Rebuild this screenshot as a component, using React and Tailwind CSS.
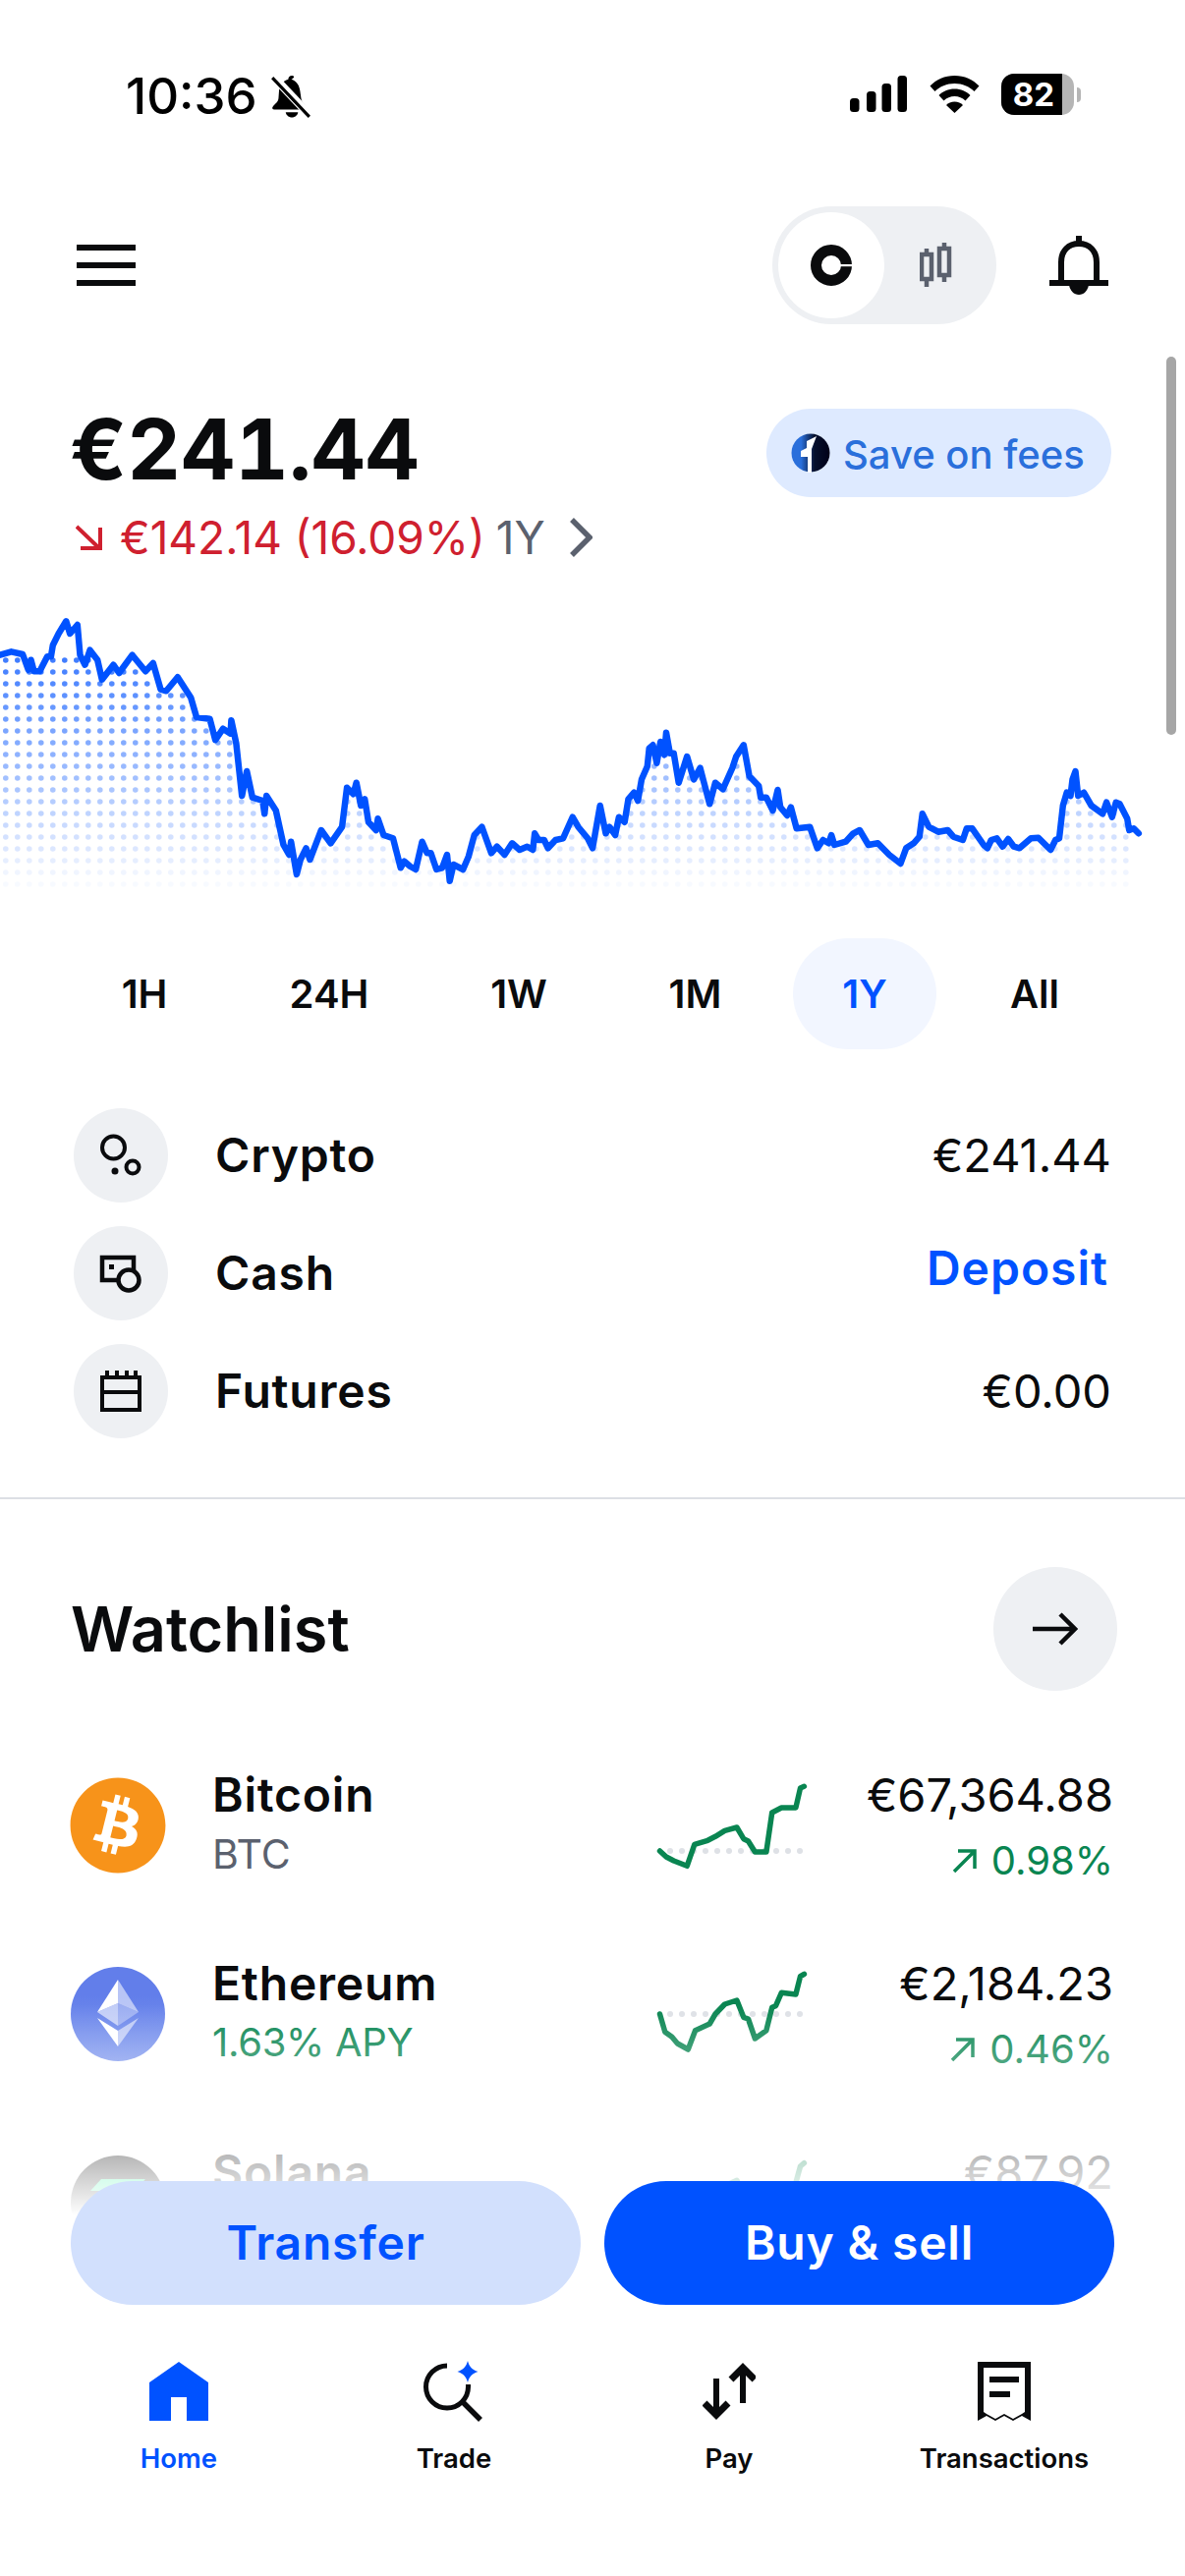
import React from 'react';
import { FaBitcoin } from 'react-icons/fa';

const LEFT = [[0,860],[30,850],[60,858],[75,905],[82,875],[90,910],[105,910],[125,865],[135,865],[140,830],[155,795],[175,757],[185,795],[205,768],[212,860],[225,890],[238,845],[258,875],[270,935],[300,890],[315,915],[350,860],[385,910],[405,885],[425,965],[440,970],[470,928],[505,990],[520,1050],[555,1055],[570,1120],[590,1085],[610,1100],[612,1060],[625,1130],[640,1290],[653,1215],[668,1295],[695,1305],[700,1345],[705,1290],[730,1335],[750,1440],[765,1470],[770,1430],[785,1530],[795,1485],[810,1450],[820,1485],[850,1395],[875,1435],[905,1385],[918,1265],[935,1285],[943,1250],[955,1320],[965,1300],[975,1370],[995,1395],[1000,1360],[1015,1410],[1040,1420],[1060,1510],[1070,1490],[1085,1505],[1100,1515],[1117,1430],[1130,1465],[1140,1465],[1155,1515],[1170,1510],[1183,1470],[1190,1550],[1200,1500],[1225,1515],[1240,1475],[1255,1410],[1275,1385],[1300,1465],[1315,1445],[1335,1470],[1355,1435],[1375,1455],[1395,1445],[1410,1455],[1415,1405],[1425,1425],[1440,1425],[1450,1450],[1470,1425],[1490,1420],[1515,1355],[1530,1385],[1555,1420],[1568,1450]];
const RIGHT = [[20,1320],[35,1405],[45,1385],[60,1410],[70,1355],[85,1370],[95,1300],[110,1280],[120,1305],[130,1240],[145,1200],[150,1145],[160,1135],[170,1190],[180,1125],[190,1165],[195,1097],[205,1160],[215,1160],[228,1250],[250,1170],[268,1240],[285,1205],[295,1250],[310,1315],[325,1250],[345,1270],[370,1205],[380,1170],[400,1135],[415,1230],[440,1260],[445,1295],[460,1295],[477,1335],[490,1272],[497,1325],[515,1350],[525,1325],[540,1390],[575,1385],[595,1450],[610,1425],[625,1435],[632,1410],[640,1440],[670,1430],[690,1405],[707,1395],[730,1440],[755,1435],[785,1470],[815,1497],[830,1450],[850,1435],[865,1415],[873,1345],[890,1385],[915,1400],[940,1395],[955,1415],[980,1425],[990,1390],[1005,1390],[1035,1440],[1045,1450],[1055,1425],[1070,1420],[1085,1445],[1100,1422],[1115,1445],[1130,1450],[1160,1420],[1180,1418],[1212,1455],[1225,1425],[1235,1420],[1245,1320],[1255,1280],[1265,1290],[1270,1240],[1278,1215],[1285,1290],[1300,1280],[1320,1320],[1350,1345],[1360,1310],[1375,1355],[1385,1310],[1395,1315],[1415,1360],[1420,1395],[1432,1390],[1445,1405]];
const LINE = [...LEFT.map(([x, y]) => [x / 2.6, 380 + y / 3]), ...RIGHT.map(([x, y]) => [603 + x / 2.6, 380 + y / 3])];
const BTC = [[178,372],[195,390],[215,402],[250,418],[270,352],[305,340],[325,328],[350,310],[382,300],[400,335],[412,342],[430,375],[460,375],[475,255],[500,240],[538,240],[550,180],[560,175]];
const ETH = [[178,870],[192,925],[210,940],[225,960],[253,978],[272,920],[310,900],[325,870],[350,840],[382,828],[400,880],[412,885],[430,945],[460,920],[475,850],[485,845],[500,805],[538,810],[550,755],[560,748]];
const SOL = [[178,1490],[253,1500],[272,1440],[350,1395],[382,1378],[400,1420],[430,1440],[460,1440],[475,1420],[538,1385],[550,1335],[560,1325]];

const pts = (a) => a.map(([x, y]) => `${x.toFixed(1)},${y.toFixed(1)}`).join(' ');
const sparkPts = (a) => pts(a.map(([x, y]) => [603 + x / 2.6, 1760 + y / 3]));

function lineYAt(x) {
  for (let i = 1; i < LINE.length; i++) {
    if (x <= LINE[i][0]) {
      const [x0, y0] = LINE[i - 1];
      const [x1, y1] = LINE[i];
      const t = x1 === x0 ? 0 : (x - x0) / (x1 - x0);
      return y0 + (y1 - y0) * t;
    }
  }
  return 2000;
}

const DOTS = [];
for (let r = 0; r < 20; r++) {
  const y = 672 + r * 12;
  for (let c = 0; c < 97; c++) {
    const x = 5.8 + c * 12;
    if (x > 1156) continue;
    if (y > lineYAt(x) + 3) DOTS.push({ x, y, o: Math.max(0.03, 0.75 - (y - 672) * 0.0032) });
  }
}

function Chart() {
  return (
    <svg className="block mt-[48px] w-full h-[290px]" viewBox="0 620 1206 290">
      {DOTS.map((d, i) => <circle key={i} cx={d.x} cy={d.y} r="2.8" fill="#0052ff" opacity={d.o} />)}
      <polyline points={pts(LINE)} fill="none" stroke="#0052ff" strokeWidth="6.5" strokeLinejoin="round" strokeLinecap="round" />
    </svg>
  );
}

function Spark({ data, top, base, color }) {
  return (
    <svg className="block flex-none w-[156px] h-[96px]" viewBox={`666 ${top} 156 96`}>
      {[0,1,2,3,4,5,6,7,8,9,10,11].map((i) => <circle key={i} cx={682 + i * 12} cy={top + base} r="3" fill="#dee1e6" />)}
      <polyline points={sparkPts(data)} fill="none" stroke={color} strokeWidth="5.5" strokeLinejoin="round" strokeLinecap="round" />
    </svg>
  );
}

function UpArrow({ color }) {
  return (
    <svg className="block flex-none w-[26px] h-[26px] mr-[14px]" viewBox="0 0 26 26" fill="none" stroke={color} strokeWidth="3.5">
      <path d="M2 24 23 3M6 3h17v18" />
    </svg>
  );
}

function StatusBar() {
  return (
    <div className="h-[210px] flex items-start justify-between pl-[128px] pr-[106px] pt-[74px]">
      <div className="flex items-center h-[48px]">
        <span className="text-[51px] leading-[48px] font-medium text-black">10:36</span>
        <svg className="ml-[13px] w-[42px] h-[46px]" viewBox="0 0 40 44">
          <path d="M21 2c-2 0-3.500 1.600-3.500 3.500C12 7 9 11.500 8.500 17L8 24c-.3 3.500-3 5-5.500 8-1 1.200-.6 3 1.500 3h29.500c2.200 0 2.600-1.800 1.500-3-2.500-3-4.500-4.500-5-8l-1-7c-.6-5.500-3.500-10-8.500-11.500C24.500 3.600 23 2 21 2z" fill="#000" />
          <path d="M15 37.500c.5 3 3 5 6 5s5.500-2 6-5z" fill="#000" />
          <path d="M3 3 39 41" stroke="#fff" strokeWidth="8" />
          <path d="M2 4 38 42" stroke="#000" strokeWidth="3" />
        </svg>
      </div>
      <div className="flex items-center h-[44px]">
        <svg className="w-[58px] h-[38px]" viewBox="0 0 58 38" fill="#000">
          <rect x="0" y="23" width="9.500" height="14" rx="3.500" />
          <rect x="17" y="16" width="9.500" height="21" rx="3.500" />
          <rect x="32.500" y="8" width="9.500" height="29" rx="3.500" />
          <rect x="48.500" y="0" width="9.500" height="37" rx="3.500" />
        </svg>
        <svg className="ml-[23px] w-[51px] h-[38px]" viewBox="0 0 51 38" fill="#000">
          <path d="M25.500 0C15.500 0 7 4 .5 10.500l5 5.500C10.500 11 17.500 8 25.500 8s15 3 20 8l5-5.500C44 4 35.500 0 25.500 0z" />
          <path d="M25.500 13.500c-6.500 0-12 2.500-16 6.500l5 5.500c3-2.800 6.800-4.500 11-4.500s8 1.700 11 4.500l5-5.500c-4-4-9.500-6.500-16-6.500z" />
          <path d="M25.500 26.500c-3.500 0-6.500 1.300-8.500 3.500l8.500 8 8.500-8c-2-2.200-5-3.500-8.500-3.500z" />
        </svg>
        <div className="ml-[22px] flex items-center">
          <div className="relative w-[74px] h-[42px] rounded-[13px] overflow-hidden bg-[#b5b5b5]">
            <div className="w-[62px] h-[42px] bg-black flex items-center justify-center pl-[4px]">
              <span className="text-[33px] leading-[42px] font-bold text-white">82</span>
            </div>
          </div>
          <div className="ml-[3px] w-[4px] h-[15px] rounded-r-full bg-[#b5b5b5]" />
        </div>
      </div>
    </div>
  );
}

function Header() {
  return (
    <div className="h-[120px] flex items-center justify-between pl-[78px] pr-[78px]">
      <div className="w-[60px] flex flex-col gap-[12px]">
        <div className="h-[6px] bg-[#0a0b0d]" />
        <div className="h-[6px] bg-[#0a0b0d]" />
        <div className="h-[6px] bg-[#0a0b0d]" />
      </div>
      <div className="flex items-center">
        <div className="w-[228px] h-[120px] rounded-full bg-[#eef0f3] flex items-center pl-[6px]">
          <div className="w-[108px] h-[108px] rounded-full bg-white flex items-center justify-center">
            <svg className="w-[42px] h-[42px]" viewBox="0 0 42 42">
              <circle cx="21" cy="21" r="15.500" fill="none" stroke="#0a0b0d" strokeWidth="11" />
              <rect x="29" y="20" width="14" height="2.200" fill="#fff" />
            </svg>
          </div>
          <svg className="ml-[36px] w-[36px] h-[46px]" viewBox="0 0 36 46" fill="none" stroke="#5b616e">
            <rect x="2" y="12" width="10" height="25" strokeWidth="4.500" />
            <path d="M7 6v6M7 37v8M25 0v6M25 33v7" strokeWidth="4.500" />
            <rect x="20" y="6" width="10" height="27" strokeWidth="4.500" />
          </svg>
        </div>
        <svg className="ml-[54px] w-[60px] h-[60px]" viewBox="0 0 60 60">
          <path d="M12 45V27C12 15 19.500 8 30 8s18 7 18 19v18" fill="none" stroke="#0a0b0d" strokeWidth="6" />
          <path d="M30 0v9" stroke="#0a0b0d" strokeWidth="6" />
          <path d="M0 45h60v6H0z" fill="#0a0b0d" />
          <path d="M20 50h20c-1 6-5 10-10 10s-9-4-10-10z" fill="#0a0b0d" />
        </svg>
      </div>
    </div>
  );
}

function Balance() {
  return (
    <div className="mt-[86px] pl-[71px] pr-[75px] flex items-start justify-between">
      <div>
        <div className="text-[85px] leading-[84px] font-bold text-[#0a0b0d] [font-feature-settings:'tnum']">€241.44</div>
        <div className="mt-[22px] flex items-center h-[50px]">
          <svg className="ml-[6px] w-[27px] h-[26px]" viewBox="0 0 27 26" fill="none" stroke="#cf202f" strokeWidth="4">
            <path d="M1 2 24 24M25 3v21H5" />
          </svg>
          <span className="ml-[18px] text-[46px] leading-[50px] text-[#cf202f] whitespace-nowrap">€142.14 (16.09%)</span>
          <span className="ml-[11px] text-[46px] leading-[50px] text-[#5b616e]">1Y</span>
          <svg className="ml-[24px] w-[24px] h-[40px]" viewBox="0 0 24 40" fill="none" stroke="#5b616e" strokeWidth="5.500">
            <path d="M3 2l18 18L3 38" />
          </svg>
        </div>
      </div>
      <div className="h-[90px] w-[351px] rounded-full bg-[#deeaff] flex items-center pl-[25px]">
        <svg className="flex-none w-[40px] h-[40px]" viewBox="0 0 40 40">
          <defs>
            <linearGradient id="one" x1="0" y1="0" x2="1" y2="0">
              <stop offset="0.25" stopColor="#2a6fdb" />
              <stop offset="0.6" stopColor="#06102c" />
              <stop offset="1" stopColor="#000018" />
            </linearGradient>
          </defs>
          <circle cx="20" cy="20" r="19.500" fill="url(#one)" />
          <path d="M16 8l10-5-5 13v24h-4V24h-7v-6l6-3z" fill="#fff" />
        </svg>
        <span className="ml-[13px] mt-[3px] text-[40px] leading-[46px] font-medium text-[#2a6fdb] whitespace-nowrap">Save on fees</span>
      </div>
    </div>
  );
}

const TABS = [
  ['1H', 'w-[150px]'],
  ['24H', 'w-[226px]'],
  ['1W', 'w-[160px]'],
  ['1M', 'w-[199px]'],
  ['1Y', 'w-[146px]'],
  ['All', 'w-[200px]'],
];

function Tabs() {
  return (
    <div className="mt-[45px] pl-[72px] flex">
      {TABS.map(([t, w]) => (
        <div key={t} className={`${w} h-[113px] rounded-full flex items-center justify-center text-[40px] font-semibold ${t === '1Y' ? 'bg-[#f2f6ff] text-[#0052ff]' : 'text-[#0a0b0d]'}`}>{t}</div>
      ))}
    </div>
  );
}

function AssetRow({ icon, label, children }) {
  return (
    <div className="h-[96px] flex items-center">
      <div className="w-[96px] h-[96px] rounded-full bg-[#eef0f3] flex-none">
        <svg className="block w-[96px] h-[96px]" viewBox="0 0 96 96">{icon}</svg>
      </div>
      <div className="ml-[48px] flex-1 text-[48px] leading-[56px] font-semibold tracking-[0.8px] text-[#0a0b0d]">{label}</div>
      {children}
    </div>
  );
}

function Assets() {
  const ink = '#0a0b0d';
  return (
    <div className="mt-[60px] pl-[75px] pr-[75px] flex flex-col gap-[24px]">
      <AssetRow label="Crypto" icon={<g fill="none" stroke={ink} strokeWidth="4">
        <circle cx="40.500" cy="40" r="11.500" /><circle cx="60" cy="60" r="6.500" /><circle cx="42" cy="64" r="3.500" fill={ink} stroke="none" />
      </g>}>
        <span className="text-[47px] leading-[56px] text-[#0a0b0d]">€241.44</span>
      </AssetRow>
      <AssetRow label="Cash" icon={<g fill="none" stroke={ink} strokeWidth="4.500">
        <rect x="29" y="32" width="32" height="23" />
        <rect x="36" y="39" width="5" height="5" fill={ink} stroke="none" />
        <circle cx="56" cy="55" r="10.500" fill="#eef0f3" />
      </g>}>
        <span className="-mt-[11px] mr-[3px] text-[48px] leading-[56px] font-semibold tracking-[1px] text-[#0052ff]">Deposit</span>
      </AssetRow>
      <AssetRow label="Futures" icon={<g fill={ink}>
        <path fillRule="evenodd" d="M27 32h42v37H27zM31 36v11h34V36zM31 51v14h34V51z" />
        <rect x="32" y="27" width="4" height="6" /><rect x="42" y="27" width="4" height="6" /><rect x="52" y="27" width="4" height="6" /><rect x="61" y="27" width="4" height="6" />
      </g>}>
        <span className="text-[47px] leading-[56px] text-[#0a0b0d]">€0.00</span>
      </AssetRow>
    </div>
  );
}

function CoinRow({ icon, name, sub, subClass, spark, price, pct, pctColor, pctClass }) {
  return (
    <div className="h-[96px] flex items-center pl-[72px] pr-[73px]">
      {icon}
      <div className="ml-[48px] flex-1 self-start -mt-[12px]">
        <div className="text-[48px] leading-[58px] font-semibold tracking-[0.8px] text-[#0a0b0d]">{name}</div>
        {sub && <div className={`mt-[2px] leading-[58px] ${subClass}`}>{sub}</div>}
      </div>
      {spark}
      <div className="w-[311px] self-start -mt-[12px] flex flex-col items-end">
        <div className="text-[47px] leading-[58px] text-[#0a0b0d] whitespace-nowrap">{price}</div>
        {pct && (
          <div className="mt-[9px] flex items-center h-[58px]">
            <UpArrow color={pctColor} />
            <span className={`text-[40px] leading-[58px] ${pctClass}`}>{pct}</span>
          </div>
        )}
      </div>
    </div>
  );
}

function Watchlist() {
  return (
    <div>
      <div className="mt-[69px] pl-[72px] pr-[69px] flex items-center justify-between">
        <div className="text-[63px] leading-[72px] font-semibold text-[#0a0b0d]">Watchlist</div>
        <div className="w-[126px] h-[126px] rounded-full bg-[#eef0f3] flex items-center justify-center">
          <svg className="w-[46px] h-[34px]" viewBox="0 0 46 34" fill="none" stroke="#0a0b0d" strokeWidth="4.500">
            <path d="M0 17h42M28 2l15 15-15 15" />
          </svg>
        </div>
      </div>
      <div className="mt-[89px] flex flex-col gap-[96px]">
        <CoinRow
          icon={<div className="flex-none w-[96px] h-[96px] flex items-center justify-center"><FaBitcoin className="flex-none w-[100px] h-[100px] text-[#f7931a]" /></div>}
          name="Bitcoin" sub="BTC" subClass="text-[41px] text-[#5b616e]"
          spark={<Spark data={BTC} top={1810} base={74} color="#098551" />}
          price="€67,364.88" pct="0.98%" pctColor="#098551" pctClass="text-[#098551]"
        />
        <CoinRow
          icon={<svg className="flex-none block w-[96px] h-[96px]" viewBox="0 0 96 96">
            <defs><linearGradient id="eth" x1="0" y1="0" x2="0" y2="1"><stop offset="0.3" stopColor="#627eea" /><stop offset="1" stopColor="#7f98ee" /></linearGradient></defs>
            <circle cx="48" cy="48" r="48" fill="url(#eth)" />
            <polygon points="48,13 27,46 48,37" fill="#fff" />
            <polygon points="48,13 69,46 48,37" fill="#fff" opacity="0.55" />
            <polygon points="27,46 48,37 48,60" fill="#fff" opacity="0.6" />
            <polygon points="69,46 48,37 48,60" fill="#fff" opacity="0.35" />
            <polygon points="27,52 48,81 48,65" fill="#fff" />
            <polygon points="69,52 48,81 48,65" fill="#fff" opacity="0.55" />
          </svg>}
          name="Ethereum" sub="1.63% APY" subClass="text-[40px] tracking-[-0.3px] text-[#098551]"
          spark={<Spark data={ETH} top={2002} base={48} color="#098551" />}
          price="€2,184.23" pct="0.46%" pctColor="#098551" pctClass="text-[#098551]"
        />
        <CoinRow
          icon={<svg className="flex-none block w-[96px] h-[96px]" viewBox="0 0 96 96">
            <circle cx="48" cy="48" r="48" fill="#000" />
            <polygon points="31,24 76,24 65,36 20,36" fill="#14f195" />
          </svg>}
          name="Solana"
          spark={<Spark data={SOL} top={2194} base={60} color="#098551" />}
          price="€87.92"
        />
      </div>
    </div>
  );
}

function NavItem({ label, active, children }) {
  return (
    <div className="w-[280px] flex flex-col items-center">
      <div className="h-[62px] w-[100px] flex items-center justify-center">{children}</div>
      <div className={`mt-[20px] text-[27.5px] leading-[34px] font-semibold ${active ? 'text-[#0052ff]' : 'text-[#0a0b0d]'}`}>{label}</div>
    </div>
  );
}

function Footer() {
  return (
    <div className="absolute inset-x-0 bottom-0 top-[2040px] pt-[180px] bg-[linear-gradient(to_bottom,rgba(255,255,255,0)_0px,#ffffff_215px)]">
      <div className="pl-[72px] pr-[72px] flex gap-[24px]">
        <div className="w-[519px] h-[126px] rounded-full bg-[#d2e0fd] flex items-center justify-center text-[48px] font-semibold tracking-[0.8px] text-[#0052ff]">Transfer</div>
        <div className="w-[519px] h-[126px] rounded-full bg-[#0052ff] flex items-center justify-center text-[48px] font-semibold tracking-[0.8px] text-white">Buy &amp; sell</div>
      </div>
      <div className="mt-[57px] pl-[42px] flex">
        <NavItem label="Home" active>
          <svg className="w-[60px] h-[60px]" viewBox="0 0 60 60">
            <path fillRule="evenodd" d="M30 0 60 21v39H38V36H22v24H0V21z" fill="#0052ff" />
          </svg>
        </NavItem>
        <NavItem label="Trade">
          <svg className="w-[62px] h-[62px]" viewBox="0 0 62 62" fill="none">
            <path d="M24 5A21.500 21.500 0 1 0 45.500 26.500V24" stroke="#0a0b0d" strokeWidth="5" />
            <path d="M40 42 58 60" stroke="#0a0b0d" strokeWidth="5.500" />
            <path d="M45 0c1.500 6 4.500 9 10.500 11-6 2-9 5-10.500 11-1.500-6-4.500-9-10.500-11 6-2 9-5 10.500-11z" fill="#0052ff" />
          </svg>
        </NavItem>
        <NavItem label="Pay">
          <svg className="w-[54px] h-[60px]" viewBox="0 0 54 60" fill="none" stroke="#0a0b0d" strokeWidth="6">
            <path d="M14 17V55" />
            <path d="M2 42 14 54 26 42" strokeWidth="7" />
            <path d="M41 42V5" />
            <path d="M29 18 41 6 53 18" strokeWidth="7" />
          </svg>
        </NavItem>
        <NavItem label="Transactions">
          <svg className="w-[54px] h-[60px]" viewBox="0 0 54 60">
            <path fillRule="evenodd" d="M0 0h54v60l-9-5-9 5-9-5-9 5-9-5-9 5zM6 6v45l3 2 9 5 9-5 9 5 9-5 3-2V6z" fill="#0a0b0d" />
            <rect x="12" y="15" width="30" height="6" fill="#0a0b0d" />
            <rect x="12" y="30" width="21" height="6" fill="#0a0b0d" />
          </svg>
        </NavItem>
      </div>
    </div>
  );
}

export default function App() {
  return (
    <div className="relative w-[1206px] h-[2622px] overflow-hidden bg-white font-['Inter','Liberation_Sans',sans-serif]">
      <StatusBar />
      <Header />
      <Balance />
      <Chart />
      <Tabs />
      <Assets />
      <div className="mt-[60px] h-[2px] bg-[#dcdfe4]" />
      <Watchlist />
      <div className="absolute left-[1187px] top-[363px] w-[10px] h-[385px] rounded-full bg-[#a6a6a6]" />
      <Footer />
    </div>
  );
}
